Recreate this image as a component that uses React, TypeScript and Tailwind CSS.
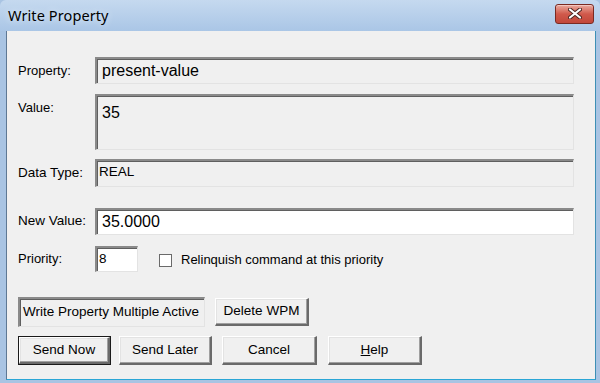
import React from "react";

const font = { fontFamily: '"Liberation Sans", Arial, sans-serif' };

function Sunken({ className = "", children }: { className?: string; children?: React.ReactNode }) {
  return (
    <div
      className={
        "border-t-2 border-l-2 border-t-[#8a8a8a] border-l-[#8a8a8a] border-r border-b border-r-[#e3e3e3] border-b-[#e3e3e3] shadow-[inset_1px_1px_0_#5f5f5f] " +
        className
      }
    >
      {children}
    </div>
  );
}

function Btn({ w, children, def = false }: { w: string; children: React.ReactNode; def?: boolean }) {
  return (
    <div className={(def ? "border border-[#1a1a1a] " : "") + "flex"}>
      <div
        className={
          w +
          " flex items-center justify-center bg-[#f0f0f0] text-[13.5px] text-black border-t border-l border-t-white border-l-white border-r-2 border-b-2 border-r-[#6a6a6a] border-b-[#6a6a6a] shadow-[inset_-1px_-1px_0_#a0a0a0,inset_1px_1px_0_#e3e3e3]"
        }
      >
        {children}
      </div>
    </div>
  );
}

export default function App() {
  return (
    <div className="w-[600px] h-[383px] bg-[#a9c4e3] flex flex-col overflow-hidden" style={font}>
      {/* title bar */}
      <div className="h-[31px] flex items-center justify-between bg-gradient-to-b from-[#c5d9ef] to-[#aac6e6] rounded-tl-[6px] rounded-tr-[6px] pl-[8px] pr-[6px] shrink-0">
        <span
          className="text-[14.5px] text-black tracking-[0.1px] mt-[1px] [text-shadow:0_0_6px_#e8f0fa]"
          style={{ fontFamily: '"Noto Sans", "Open Sans", sans-serif' }}
        >
          Write Property
        </span>
        <div className="w-[39px] h-[20px] mb-[4px] rounded-[3px] border border-[#7a2a22] bg-gradient-to-b from-[#e9a99f] via-[#d0594b] to-[#c2473a] flex items-center justify-center shadow-[inset_0_1px_0_#f3c7c0]">
          <svg width="14" height="11" viewBox="0 0 14 11">
            <path d="M2 1.5 L12 9.5 M12 1.5 L2 9.5" stroke="#4a2420" strokeWidth="4" strokeLinecap="round" />
            <path d="M2 1.5 L12 9.5 M12 1.5 L2 9.5" stroke="#ffffff" strokeWidth="2.2" strokeLinecap="round" />
          </svg>
        </div>
      </div>
      {/* client */}
      <div className="flex-1 flex ml-[6px] mr-[4px] mb-[3px]">
        <div className="border-l border-[#5e7894] border-r border-r-[#3d8fb5] border-b border-b-[#2aa6d6] flex-1 flex">
          <div className="flex-1 bg-[#f0f0f0] flex flex-col pl-[11px] pt-[26px] text-[13px] text-black">
            {/* Property */}
            <div className="flex items-center h-[27px]">
              <span className="w-[77px]">Property:</span>
              <Sunken className="w-[479px] h-[27px] flex items-center pl-[5px] text-[16px]">present-value</Sunken>
            </div>
            {/* Value */}
            <div className="flex mt-[10px] h-[56px]">
              <span className="w-[77px] pt-[4px]">Value:</span>
              <Sunken className="w-[479px] h-[56px] pl-[5px] pt-[5px] text-[16px]">35</Sunken>
            </div>
            {/* Data type */}
            <div className="flex items-center mt-[9px] h-[28px]">
              <span className="w-[77px] text-[13.5px]">Data Type:</span>
              <Sunken className="w-[479px] h-[28px] flex items-center pl-[2px] pb-[3px] text-[13.5px]">REAL</Sunken>
            </div>
            {/* New value */}
            <div className="flex items-center mt-[21px] h-[27px]">
              <span className="w-[77px] text-[13.5px]">New Value:</span>
              <Sunken className="w-[479px] h-[27px] flex items-center pl-[5px] bg-white text-[16px]">35.0000</Sunken>
            </div>
            {/* Priority */}
            <div className="flex items-center mt-[11px] h-[26px]">
              <span className="w-[77px]">Priority:</span>
              <Sunken className="w-[43px] h-[26px] flex items-center pl-[2px] bg-white text-[13.5px]">8</Sunken>
              <div className="ml-[21px] w-[13px] h-[13px] border border-[#6a6a6a] bg-white mt-[2px]" />
              <span className="ml-[9px] mt-[2px]">Relinquish command at this priority</span>
            </div>
            {/* WPM row */}
            <div className="flex items-center mt-[25px] h-[30px]">
              <Sunken className="w-[187px] h-[30px] flex items-center pl-[3px] text-[13.5px]">Write Property Multiple Active</Sunken>
              <div className="ml-[10px]">
                <Btn w="w-[94px] h-[28px]">Delete WPM</Btn>
              </div>
            </div>
            {/* buttons */}
            <div className="flex items-center mt-[9px] h-[29px]">
              <Btn def w="w-[91px] h-[27px]">Send Now</Btn>
              <div className="ml-[8px]">
                <Btn w="w-[93px] h-[29px]">Send Later</Btn>
              </div>
              <div className="ml-[10px]">
                <Btn w="w-[95px] h-[29px]">Cancel</Btn>
              </div>
              <div className="ml-[11px]">
                <Btn w="w-[94px] h-[29px]">
                  <span>
                    <span className="underline">H</span>elp
                  </span>
                </Btn>
              </div>
            </div>
          </div>
        </div>
      </div>
    </div>
  );
}
